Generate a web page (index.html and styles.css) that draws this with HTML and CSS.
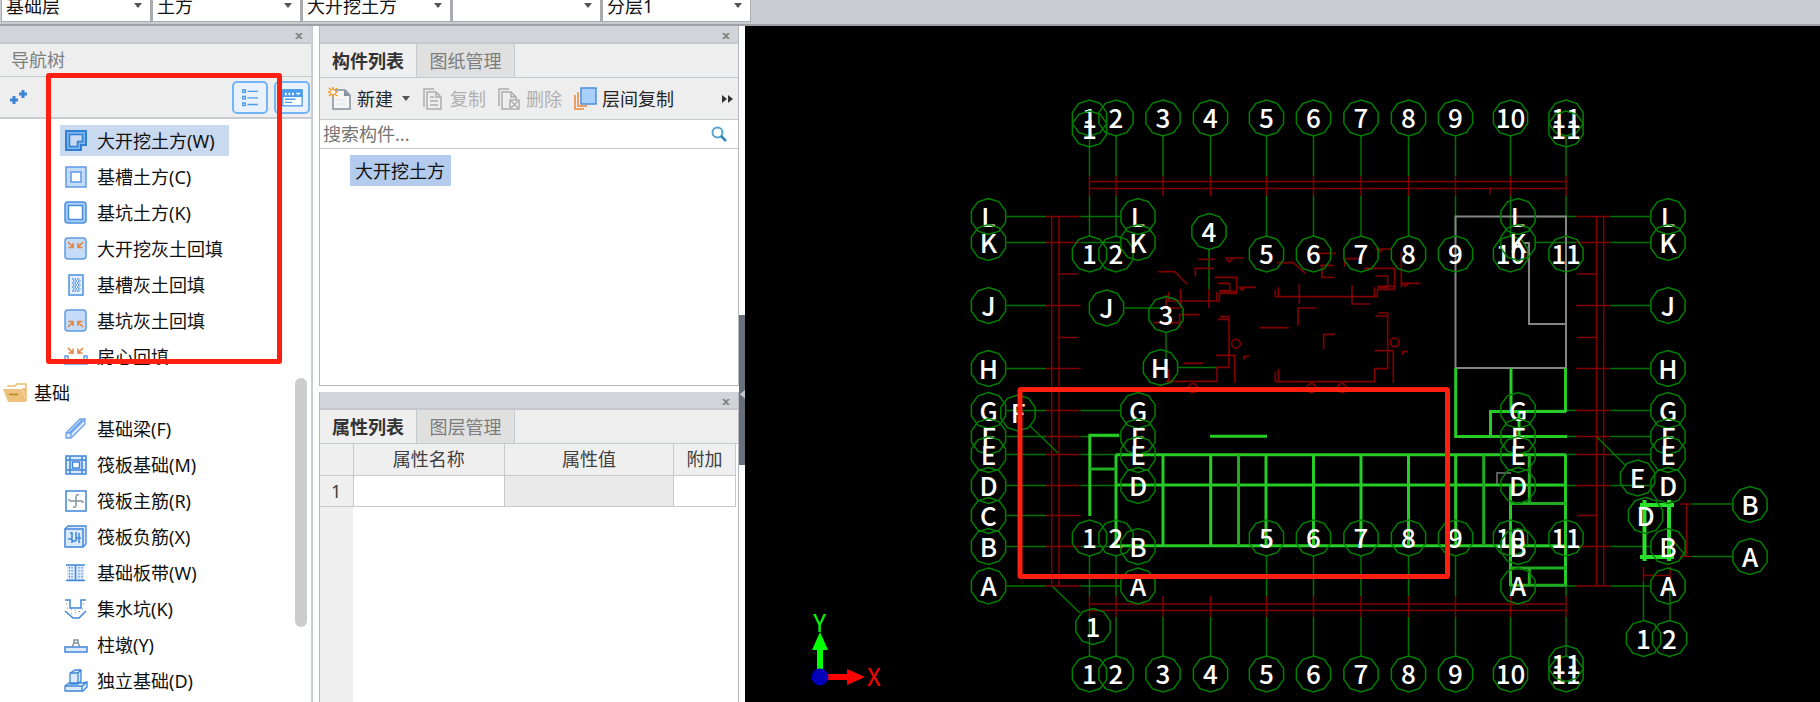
FILE: index.html
```html
<!DOCTYPE html>
<html lang="zh-CN">
<head>
<meta charset="utf-8">
<title>大开挖土方</title>
<link rel="stylesheet" href="styles.css">
</head>
<body>
<svg class="defs" aria-hidden="true">
  <symbol id="i-close" viewBox="0 0 10 10"><path d="M1 2H3.500L5 3.500L6.500 2H9L6.300 5L9 8H6.500L5 6.500L3.500 8H1L3.700 5Z" fill="#858585"/></symbol>
  <symbol id="i-arrow" viewBox="0 0 8 5"><path d="M0 0H8L4 5Z" fill="#555"/></symbol>
</svg>

<header class="topbar">
  <div class="combo"><select aria-label="楼层"><option>基础层</option></select><svg><use href="#i-arrow"/></svg></div>
  <div class="combo"><select aria-label="构件类别"><option>土方</option></select><svg><use href="#i-arrow"/></svg></div>
  <div class="combo"><select aria-label="构件类型"><option>大开挖土方</option></select><svg><use href="#i-arrow"/></svg></div>
  <div class="combo"><select aria-label="构件"><option></option></select><svg><use href="#i-arrow"/></svg></div>
  <div class="combo"><select aria-label="分层"><option>分层1</option></select><svg><use href="#i-arrow"/></svg></div>
</header>

<main class="workspace">
  <aside class="nav">
    <div class="band"><button class="close" aria-label="关闭"><svg><use href="#i-close"/></svg></button></div>
    <h2 class="nav-title">导航树</h2>
    <div class="nav-tools">
      <button class="plus" aria-label="展开"><svg viewBox="0 0 20 16"><path d="M5 7v8M1 11h8M14 1v8M10 5h8" stroke="#3d84d6" stroke-width="3"/></svg></button>
      <button class="view" aria-label="列表视图"><svg viewBox="0 0 36 33"><g fill="none" stroke="#4c9ced" stroke-width="1.500"><rect x="9.700" y="7.700" width="3" height="3"/><rect x="9.700" y="15.200" width="3" height="3"/><rect x="9.700" y="22.700" width="3" height="3"/><path d="M15 9.500h12M15 17h12M15 24.500h12"/></g></svg></button>
      <button class="view" aria-label="面板视图"><svg viewBox="0 0 36 33"><rect x="7.500" y="8" width="22" height="18" fill="#fff" stroke="#4c9ced" stroke-width="1.500"/><path d="M7 7h23v9H7z" fill="#4c9ced"/><path d="M10 11h2v3h-2zM14 11h2v3h-2zM18 11h2v3h-2zM22 11h6l-3 3z" fill="#fff"/><path d="M10 18.500h12M10 22h8" stroke="#4c9ced" stroke-width="1.500"/></svg></button>
    </div>
    <div class="tree">
      <ul>
        <li><button class="node selected"><svg viewBox="0 0 24 24"><path d="M2 2h20v14h-5v5H2z" fill="#7db4ee" stroke="#2f7fd3" stroke-width="2"/><path d="M5.500 5.500h13v7h-5v5h-8z" fill="#c9d9ef" stroke="#2f7fd3" stroke-width="1.500"/></svg>大开挖土方(W)</button></li>
        <li><button class="node"><svg viewBox="0 0 24 24"><rect x="2" y="2" width="20" height="20" fill="#c5dcf8" stroke="#5e9be6" stroke-width="1.500"/><rect x="7" y="7" width="10" height="10" fill="#fff" stroke="#5e9be6" stroke-width="1.500"/></svg>基槽土方(C)</button></li>
        <li><button class="node"><svg viewBox="0 0 24 24"><rect x="1" y="1" width="21" height="21" rx="3" fill="#a9cdf7" stroke="#4a8fe0" stroke-width="1.500"/><rect x="4.500" y="4.500" width="14" height="14" fill="#fff" stroke="#4a8fe0" stroke-width="1.500"/></svg>基坑土方(K)</button></li>
        <li><button class="node"><svg viewBox="0 0 24 24"><rect x="1" y="1" width="21" height="21" rx="3" fill="#c5dcf8" stroke="#5e9be6" stroke-width="1.500"/><path d="M4 5l5 5M9 6V10.500H4.500M19 5l-5 5M14 6V10.500H18.500" fill="none" stroke="#e3813e" stroke-width="1.500"/></svg>大开挖灰土回填</button></li>
        <li><button class="node"><svg viewBox="0 0 24 24"><rect x="5" y="2" width="14" height="20" fill="#e7f1fc" stroke="#4a8fe0" stroke-width="1.500"/><path d="M8 6h8M9 8h8M8 10h8M9 12h8M8 14h8M9 16h8M8 18h8" stroke="#4a8fe0" stroke-width="1.500" stroke-dasharray="1.500 1"/></svg>基槽灰土回填</button></li>
        <li><button class="node"><svg viewBox="0 0 24 24"><rect x="1" y="1" width="21" height="21" rx="3" fill="#c5dcf8" stroke="#5e9be6" stroke-width="1.500"/><path d="M4 18l5-5M4.500 12.500H9V17M19 18l-5-5M18.500 12.500H14V17" fill="none" stroke="#e3813e" stroke-width="1.500"/></svg>基坑灰土回填</button></li>
        <li><button class="node"><svg viewBox="0 0 24 24"><path d="M4 3l5 5M9 3.500V8H4.500M19 3l-5 5M14 3.500V8H18.500" fill="none" stroke="#e3813e" stroke-width="1.500"/><path d="M1 20V11h3v6h16v-6h3v9z" fill="#fff" stroke="#5e9be6" stroke-width="1.500"/></svg>房心回填</button></li>
      </ul>
      <button class="folder"><svg viewBox="0 0 26 20"><path d="M6 4V3h7l2-2h9v17" fill="none" stroke="#e9bd6a" stroke-width="1.500"/><path d="M1 6h19l4 13H6z" fill="#eec27c"/><path d="M20 5h4v13z" fill="#eec27c"/><path d="M7 11.500h9" stroke="#b98324" stroke-width="1.500"/></svg>基础</button>
      <ul>
        <li><button class="node"><svg viewBox="0 0 24 24"><path d="M2 16L16 2h5v5L7 21H2z" fill="#dbe9fb" stroke="#6aa2ea" stroke-width="1.300"/><path d="M2 16h5v5M7 16L21 2M5 16L18 3" fill="none" stroke="#6aa2ea" stroke-width="1.300"/></svg>基础梁(F)</button></li>
        <li><button class="node"><svg viewBox="0 0 24 24"><rect x="2" y="3" width="20" height="18" fill="#dbe9fb" stroke="#3f87da" stroke-width="1.500"/><path d="M6 3v18M18 3v18M2 7h20M2 17h20" stroke="#3f87da" stroke-width="1.500"/><rect x="8.500" y="9" width="7" height="6" fill="#fff" stroke="#3f87da" stroke-width="1.500"/></svg>筏板基础(M)</button></li>
        <li><button class="node"><svg viewBox="0 0 24 24"><rect x="2" y="2" width="20" height="20" fill="#fff" stroke="#3f87da" stroke-width="1.500"/><path d="M15 6q-3-1-3 2v8q0 3-3 2M5 10q0 2 2 2h10q2 0 2 2" fill="none" stroke="#8694a1" stroke-width="1.500"/></svg>筏板主筋(R)</button></li>
        <li><button class="node"><svg viewBox="0 0 24 24"><path d="M1 4l3-3h18v18l-3 3" fill="#dbe9fb" stroke="#3f87da" stroke-width="1.300"/><rect x="1" y="4" width="18" height="18" fill="#dbe9fb" stroke="#3f87da" stroke-width="1.500"/><path d="M6 8h2v10M12 7v9M15 8v10M4 14h4M12 13h5M8 16h4" fill="none" stroke="#3f87da" stroke-width="1.500"/></svg>筏板负筋(X)</button></li>
        <li><button class="node"><svg viewBox="0 0 24 24"><path d="M3 4h17v15H3z" fill="#dbe9fb"/><path d="M2 4h19M2 19.500h19M11.500 4v15" stroke="#3f87da" stroke-width="1.500"/><path d="M5.500 6v13M8 6v13M15 6v13M18 6v13" stroke="#3f87da" stroke-dasharray="1.500 1.500"/></svg>基础板带(W)</button></li>
        <li><button class="node"><svg viewBox="0 0 24 24"><path d="M1 3h5v8h11V3h5M1 14l8 7h6l7-7" fill="none" stroke="#3f87da" stroke-width="1.500"/><path d="M2 7h3M3 11l14 4M7 17l10-3M19 7h3M18 12h3" stroke="#788" stroke-dasharray="1 3"/></svg>集水坑(K)</button></li>
        <li><button class="node"><svg viewBox="0 0 24 24"><rect x="1" y="14" width="22" height="5" fill="#dbe9fb" stroke="#3f87da" stroke-width="1.500"/><path d="M8 14l2-4h4l2 4M10 10V7h4v3" fill="none" stroke="#858f99" stroke-width="1.500"/></svg>柱墩(Y)</button></li>
        <li><button class="node"><svg viewBox="0 0 24 24"><path d="M1 17h17l5-4v5l-4 4H1zM1 17l4-3h14l4-1M18 17v5M6 4l5-3h6v11l-3 3H6zM6 4h8v11M14 4l3-3" fill="#dbe9fb" stroke="#3f87da" stroke-width="1.300"/></svg>独立基础(D)</button></li>
      </ul>
      <div class="thumb"></div>
    </div>
  </aside>

  <div class="column">
    <section class="panel components">
      <div class="band"><button class="close" aria-label="关闭"><svg><use href="#i-close"/></svg></button></div>
      <div class="tabs"><button class="tab active">构件列表</button><button class="tab">图纸管理</button></div>
      <div class="tools">
        <button><svg viewBox="0 0 24 24"><path d="M5 3h12l5 5v14H5z" fill="#f5f5f5" stroke="#84919c" stroke-width="1.500"/><path d="M16 3v6h6z" fill="#84919c"/><path d="M9 13h9M9 17h9" stroke="#dde"/><path d="M1 1l8 8M9 1L1 9M5 0v3M5 7v3M0 5h3M7 5h3" stroke="#f59a23" stroke-width="1.500"/><circle cx="5" cy="5" r="2" fill="#fff"/></svg>新建<svg class="drop"><use href="#i-arrow"/></svg></button>
        <button disabled><svg viewBox="0 0 24 24"><path d="M3 20V2h10" fill="none" stroke="#adadad" stroke-width="1.500"/><path d="M6 5h9l5 5v12H6zM15 5v5h5M9 10h4M9 14h8M9 18h8" fill="none" stroke="#adadad" stroke-width="1.500"/></svg>复制</button>
        <button disabled><svg viewBox="0 0 24 24"><path d="M2 19V2h10" fill="none" stroke="#adadad" stroke-width="1.500"/><path d="M12 22H5V5h9l5 5v3M14 5v5h5" fill="none" stroke="#adadad" stroke-width="1.500"/><rect x="13" y="13" width="9" height="9" fill="#f5f5f5" stroke="#adadad" stroke-width="1.500"/><path d="M14 14l7 7M21 14l-7 7" stroke="#adadad" stroke-width="1.500"/></svg>删除</button>
        <button><svg viewBox="0 0 24 24"><path d="M2 8v14h9M5 5v14h9" fill="none" stroke="#ef8536" stroke-width="1.500"/><rect x="8" y="1" width="15" height="16" fill="#a9cffd" stroke="#4a8fe0" stroke-width="1.500"/></svg>层间复制</button>
        <button class="more" aria-label="更多"><svg viewBox="0 0 12 10"><path d="M0 1l5 4-5 4zM6 1l5 4-5 4z" fill="#333"/></svg></button>
      </div>
      <div class="search">
        <input type="text" placeholder="搜索构件..." aria-label="搜索构件">
        <svg viewBox="0 0 16 16"><circle cx="6.500" cy="6.500" r="5" fill="none" stroke="#55a3cf" stroke-width="2"/><path d="M10 10l5 5" stroke="#2f86bd" stroke-width="2.500"/></svg>
      </div>
      <ul class="items"><li><button>大开挖土方</button></li></ul>
    </section>

    <section class="panel props">
      <div class="band"><button class="close" aria-label="关闭"><svg><use href="#i-close"/></svg></button></div>
      <div class="tabs"><button class="tab active">属性列表</button><button class="tab">图层管理</button></div>
      <div class="sheet">
        <table>
          <thead><tr><th class="num"></th><th>属性名称</th><th class="val">属性值</th><th class="add">附加</th></tr></thead>
          <tbody><tr><th class="num" scope="row">1</th><td></td><td class="ro"></td><td></td></tr></tbody>
        </table>
      </div>
    </section>
  </div>

  <div class="gutter"><button aria-label="收起面板"><svg viewBox="0 0 7 150"><path d="M7 75v10l-6-5z" fill="#c3c7cc"/></svg></button></div>

  <div class="canvas">
    <svg id="plan" viewBox="745 26 1075 676" preserveAspectRatio="xMinYMin meet" role="img" aria-label="轴网平面图">
      <g id="axes"></g>
      <g class="red" transform="translate(1140 240) scale(.333333)" stroke-width="5">
        <path d="M55 95H104L141 132M175 58H224M256 54H312M260 56l8 10 10-10M166 108V85H222M224 112H290V160H240M234 130H269V152H240V160M240 154H290M296 142H348M299 143l6 8 9-8M230 155V184M238 184V160M75 183H240M86 155V183M122 146V205M78 165V205M78 204H120M178 224H119V264M40 248H119M207 148V203"/>
        <path d="M410 68H460L496 100M528 40H588M546 76V112H583M540 76H580M614 80V56H664M670 85H764V148H712M706 27H754M715 27l6 9 8-9M784 35V142M782 130H841M788 131l8 8 9-8M706 108H743V142H712M712 139H764M703 142V172M712 172V148M406 150V172M415 142V170M406 170H712M478 133V192M636 136V192H691M474 258V204H530M358 263H446M551 327V283H585M706 228H743M715 219H743V386H704V425H406V395M415 388V425M704 332H760V428M788 345V335H804"/>
        <path d="M234 238H267M240 230H267V382H231V424H78M86 388V424M228 346H284V428M312 359V349H328M133 374V367M133 370H186V366"/>
        <circle cx="288" cy="311" r="13"/><circle cx="764" cy="307" r="13"/><circle cx="159" cy="444" r="13"/><circle cx="514" cy="444" r="13"/><circle cx="606" cy="444" r="13"/>
      </g>
      <g class="gray"><path d="M1455.500 368V216.500H1566V368H1455.500M1524 243H1529V324H1566"/><path class="thin" d="M1497 485V473H1511"/></g>
      <g class="wall">
        <path d="M1455.700 368V436.500H1567M1511 368V411.500M1565.500 368V412M1490.500 437V411.500H1566M1519 411V436M1210 436.300H1267M1116 454.800H1566M1116 485H1566M1116 545.700H1566M1089.800 516V435.300H1119"/>
        <path d="M1116 455V546M1163 455V546M1210.700 455V546M1266 455V546M1313.500 455V546M1361 455V546M1408.500 455V546M1455.700 455V546M1510.500 485V586M1565.500 455V586"/>
        <path class="dim" d="M1238.500 455V546M1483.700 455V546M1529.300 455V503.500H1566M1510 503.500H1530M1510 568H1566M1529.300 568V585.300M1510 585.300H1566M1090 469H1116"/>
        <path class="thick" d="M1640 505H1674M1640 557H1674M1644.500 500V561M1669 500V561"/>
      </g>
      <g id="bubbles"></g>
      <g class="ucs"><path d="M820 676V648" stroke="#0f0"/><path d="M812 650L820 632L828 650Z" fill="#0f0"/><path d="M820 677H848" stroke="#f00"/><path d="M847 669L865 677L847 685Z" fill="#f00"/><circle cx="820" cy="677" r="8.500" fill="#0000b8"/><text x="819.500" y="632" fill="#0f0">Y</text><text x="874" y="686" fill="#f00">X</text></g>
      <rect class="mark" x="1020" y="389.500" width="427.500" height="187" rx="1"/>
    </svg>
  </div>
</main>
<div class="callout"></div>
<script src="plan.js"></script>
</body>
</html>
```
FILE: styles.css
```css
* { box-sizing: border-box; }
body {
  margin: 0; height: 100vh; overflow: hidden; position: relative;
  display: flex; flex-direction: column;
  font: 18px/24px "Noto Sans", "Noto Sans CJK SC", sans-serif;
  color: #111; background: #fff;
}
button, select, input { font: inherit; color: inherit; border: 0; background: none; padding: 0; margin: 0; }
ul { list-style: none; margin: 0; padding: 0; }
svg { display: block; flex: none; }
.defs { position: absolute; width: 0; height: 0; }

.topbar { height: 26px; flex: none; display: flex; align-items: flex-end; padding: 0 0 3px 1px; background: #c9ccd1; border-bottom: 2px solid #9ba1a7; }
.combo { position: relative; width: 150px; height: 32px; flex: none; background: #fff; border: 1px solid #a9abaf; border-width: 0 1px 1px; margin-bottom: -1px; }
.combo + .combo { border-left-width: 2px; }
.combo select { appearance: none; width: 100%; height: 32px; padding: 0 20px 0 4px; outline: 0; }
.combo svg { position: absolute; right: 8px; bottom: 13px; width: 8px; height: 5px; pointer-events: none; }

.workspace { flex: 1; min-height: 0; display: flex; }
.band { height: 18px; flex: none; background: #d3d4da; border-bottom: 2px solid #c4c9cf; display: flex; justify-content: flex-end; align-items: flex-end; padding-right: 7px; }
.close svg { width: 10px; height: 10px; }
.band .close { height: 12px; }

.nav { width: 313px; flex: none; display: flex; flex-direction: column; border-right: 2px solid #c9cfd5; }
.nav-title { margin: 0; height: 33px; flex: none; padding: 4px 11px; font-size: 18px; font-weight: 400; color: #7d7d7d; background: #eee; border-bottom: 1px solid #c4c9cf; }
.nav-tools { height: 42px; flex: none; display: flex; align-items: center; gap: 6px; padding: 0 1px 0 9px; background: #eee; border-bottom: 2px solid #c9cdd2; }
.plus { margin-right: auto; }
.plus svg { width: 20px; height: 16px; }
.view { width: 36px; height: 33px; border: 2px solid #72b4f6; border-radius: 5px; background: #e8f1fc; }
.view svg { width: 32px; height: 29px; }
.tree { flex: 1; min-height: 0; overflow: hidden; position: relative; padding-top: 4px; }
.tree li { height: 36px; padding: 2px 0 0 60px; }
.node { height: 31px; display: flex; align-items: center; gap: 9px; padding: 0 14px 0 4px; white-space: nowrap; }
.node svg { width: 24px; height: 24px; }
.node.selected { background: #c9d9ef; }
.folder { position: relative; width: 100%; height: 46px; margin-top: -10px; padding: 10px 0 0 2px; display: flex; align-items: center; gap: 6px; background: #fff; }
.folder svg { width: 26px; height: 20px; }
.thumb { position: absolute; right: 4px; top: 259px; width: 12px; height: 249px; border-radius: 6px; background: #cdcdcd; }

.column { width: 420px; flex: none; margin-left: 6px; display: flex; flex-direction: column; gap: 6px; }
.panel { border: 1px solid #b4b8bd; display: flex; flex-direction: column; }
.components { height: 360px; flex: none; border-top: 0; }
.props { flex: 1; min-height: 0; border-width: 0 1px; }
.tabs { height: 34px; flex: none; display: flex; background: #eee; border-bottom: 1px solid #c4c9cf; }
.tab { width: 98px; background: #e0e0e0; color: #7d7d7d; border-right: 1px solid #c4c9cf; }
.tab.active { width: 97px; background: #efefef; color: #333; font-weight: 700; }
.tools { height: 42px; flex: none; display: flex; align-items: center; gap: 11px; padding: 0 4px 0 8px; background: #eee; border-bottom: 1px solid #c4c9cf; color: #262626; }
.tools button { display: flex; align-items: center; gap: 5px; white-space: nowrap; }
.tools button:disabled { color: #b0b0b0; }
.tools svg { width: 24px; height: 24px; }
.tools .drop { width: 8px; height: 5px; margin-left: 4px; }
.tools .more { margin-left: auto; }
.tools .more svg { width: 12px; height: 10px; }
.search { height: 29px; flex: none; display: flex; align-items: center; padding: 0 11px 0 3px; border-bottom: 1px solid #c4c9cf; }
.search input { flex: 1; min-width: 0; height: 26px; outline: 0; }
.search input::placeholder { color: #757575; opacity: 1; }
.search svg { width: 16px; height: 16px; }
.items { padding: 6px 0 0 30px; }
.items button { height: 31px; padding: 0 6px 0 5px; background: #b3cbec; color: #111; }

.sheet { flex: 1; background: linear-gradient(to right, #efefef 33px, #fff 33px); }
table { width: 416px; border-collapse: collapse; table-layout: fixed; }
th, td { height: 31px; padding: 0; font-weight: 400; text-align: center; color: #404040; border: 1px solid #c9c9c9; border-width: 0 1px 1px 0; }
th { background: #efefef; }
.num { width: 33px; }
.val { width: 169px; }
.add { width: 62px; }
.ro { background: #eaeaea; }

.gutter { width: 6px; flex: none; padding-top: 289px; }
.gutter button { width: 6px; height: 150px; background: #66707b; display: block; }
.gutter svg { width: 6px; height: 150px; }

.canvas { flex: 1; min-width: 0; background: #000; overflow: hidden; }
.canvas > svg { width: 100%; height: 100%; }
.canvas text { font-family: "Noto Sans CJK SC", sans-serif; font-size: 26px; text-anchor: middle; }
.canvas path, .canvas circle, .canvas polygon { fill: none; }
#bubbles polygon { stroke: #008200; stroke-width: 1.500px; }
#bubbles text { fill: #fff; font-weight: 500; }
.red { stroke: #800000; }
.green { stroke: #007400; }
#axes { stroke-width: 1.500px; }
.gray { stroke: #858585; stroke-width: 2px; }
.gray .thin { stroke: #5c5c5c; }
.wall { stroke: #27cc27; stroke-width: 3px; }
.wall .dim { stroke: #20ab20; stroke-width: 3px; }
.wall .thick { stroke: #2be02b; stroke-width: 4px; }
.canvas .ucs path[fill="#0f0"] { fill: #0f0; }
.canvas .ucs path[fill="#f00"] { fill: #f00; }
.canvas .ucs circle { fill: #0000b8; }
.ucs path[stroke] { stroke-width: 6px; }
.ucs text { font-size: 24px; }
.mark { fill: none; stroke: #ff1f11; stroke-width: 5px; stroke-linejoin: round; }
.callout { position: absolute; left: 46px; top: 73px; width: 236px; height: 291px; border: 5px solid #ff1f11; border-radius: 3px; pointer-events: none; }
```
FILE: plan.js
```js
const NS = "http://www.w3.org/2000/svg";
const axes = document.getElementById("axes");
const bubbles = document.getElementById("bubbles");

function add(parent, tag, attrs, text) {
  const el = document.createElementNS(NS, tag);
  for (const key in attrs) el.setAttribute(key, attrs[key]);
  if (text) el.textContent = text;
  parent.appendChild(el);
}
const line = (cls, d) => add(axes, "path", { class: cls, d });

const SIDES = 10;
function bubble(x, y, label) {
  const points = [];
  for (let i = 0; i < SIDES; i++) {
    const a = i * 2 * Math.PI / SIDES;
    points.push((x + 18 * Math.sin(a)).toFixed(1) + "," + (y - 18 * Math.cos(a)).toFixed(1));
  }
  add(bubbles, "polygon", { points: points.join(" ") });
  add(bubbles, "text", { x, y: y + 10 }, label);
}

const columns = { 1: 1089.5, 2: 1116, 3: 1163, 4: 1210.5, 5: 1266.5, 6: 1313.5, 7: 1361, 8: 1408.5, 9: 1455.5, 10: 1510.5, 11: 1566 };
const rows = { L: 216.5, K: 242.5, J: 305.5, H: 368.5, G: 410.5, F: 436.5, E: 454.5, D: 485.5, C: 515.5, B: 546.5, A: 586 };

for (const [name, x] of Object.entries(columns)) {
  bubble(x, 118, name);
  bubble(x, 674, name);
  line("green", `M${x} 136V176M${x} 617V656`);
  line("red", `M${x} 176V196M${x} 596V617`);
  if (name !== "3" && name !== "4") {
    line("green", `M${x} 196V236M${x} 556V596`);
    bubble(x, 254, name);
    bubble(x, 538, name);
  }
}
for (const [name, y] of Object.entries(rows)) {
  bubble(988.5, y, name);
  line("green", `M1006.5 ${y}H1046`);
  line("red", `M1046 ${y}H1080.5`);
  if (name !== "C") {
    bubble(1668, y, name);
    line("red", `M1576 ${y}H1610.5`);
    line("green", `M1610.5 ${y}H1650`);
  }
  if (!"JHC".includes(name)) {
    line("green", `M1080.5 ${y}H1120M1536 ${y}H1576`);
    bubble(1138, y, name);
    bubble(1518, y, name);
  }
}
line("red", "M1089 181.5H1566M1089 188.5H1566M1490 187V194M1089 604H1566M1089 610.5H1566");
line("red", "M1051.7 216V586M1059 216V586M1596.5 216V586M1603.7 216V586");
line("red", "M1057 274H1078M1057 337.5H1078M1577 274H1598M1577 337.5H1598M1577 515.5H1598");
line("red", "M1680 504H1692M1680 556.5H1692M1686.5 504V556.5M1643.5 567V582M1670 567V582M1643.5 575.5H1670");
line("green", "M1692 504H1732M1692 556.5H1732M1674 542L1686 556M1643.5 582V621M1670 582V621");
line("green", "M1030 426L1058 453M1052.5 586.5L1080 613M1597 437L1625 465");
line("green", "M1125 308H1164M1166 332V365M1178 367.5H1217M1209 250V289");

[[1089.5, 129, "1"], [1566, 129, "11"], [1566, 663.5, "11"], [1018, 413, "F"], [1093, 626.5, "1"],
 [1106.5, 308, "J"], [1166, 314.5, "3"], [1160.5, 367.5, "H"], [1209, 231.5, "4"],
 [1637.5, 478, "E"], [1645.5, 515.5, "D"], [1750, 504.5, "B"], [1750, 556.5, "A"],
 [1643.5, 638.5, "1"], [1669.5, 638.5, "2"]].forEach(b => bubble(...b));
```
